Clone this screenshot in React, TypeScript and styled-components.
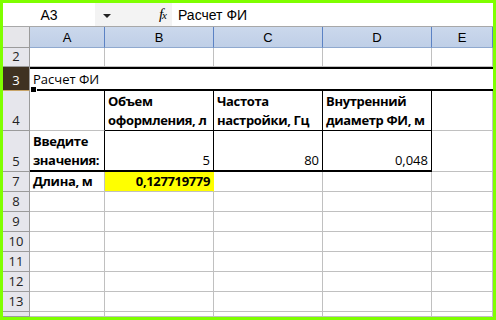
import styled, { createGlobalStyle } from 'styled-components';

const GRID = '#c0c0c0';
const BLACK = '#000';
const YELLOW = '#ffff00';
const HEAD_LINE = '#9b9b9b';

const GlobalStyle = createGlobalStyle`
    html, body {
        margin: 0;
        padding: 0;
        background: #7fff00;
    }
`;

type CellSpec = {
    text?: string[];
    bold?: boolean;
    right?: boolean;
    fill?: string;
    rb?: string;
    bb?: string;
    bbw?: number;
    span?: number;
    selected?: boolean;
};

type RowSpec = {
    num: string;
    height: number;
    dark?: boolean;
    cells: CellSpec[];
};

const empty = (): CellSpec[] => [{}, {}, {}, {}, {}];

const rows: RowSpec[] = [
    { num: '2', height: 19, cells: empty() },
    { num: '3', height: 24, dark: true, cells: [{ text: ['Расчет ФИ'], span: 5, selected: true }] },
    {
        num: '4', height: 40, cells: [
            { rb: BLACK },
            { text: ['Объем', 'оформления, л'], bold: true, rb: BLACK, bb: BLACK },
            { text: ['Частота', 'настройки, Гц'], bold: true, rb: BLACK, bb: BLACK },
            { text: ['Внутренний', 'диаметр ФИ, м'], bold: true, rb: BLACK, bb: BLACK },
            {},
        ]
    },
    {
        num: '5', height: 41, cells: [
            { text: ['Введите', 'значения:'], bold: true, rb: BLACK, bb: BLACK, bbw: 2 },
            { text: ['5'], right: true, rb: BLACK, bb: BLACK, bbw: 2 },
            { text: ['80'], right: true, rb: BLACK, bb: BLACK, bbw: 2 },
            { text: ['0,048'], right: true, rb: BLACK, bb: BLACK, bbw: 2 },
            {},
        ]
    },
    {
        num: '7', height: 20, cells: [
            { text: ['Длина, м'], bold: true },
            { text: ['0,127719779'], bold: true, right: true, fill: YELLOW, rb: YELLOW },
            {}, {}, {},
        ]
    },
    ...['8', '9', '10', '11', '12', '13'].map(num => ({ num, height: 20, cells: empty() })),
    { num: '', height: 5, cells: empty() },
];

const Frame = styled.div`
    box-sizing: border-box;
    width: 496px;
    height: 320px;
    padding: 3px;
    background: #7fff00;
`;

const Window = styled.div`
    width: 490px;
    height: 314px;
    background: #fff;
    overflow: hidden;
    display: flex;
    flex-direction: column;
`;

const FormulaBar = styled.div`
    display: flex;
    align-items: stretch;
    height: 23px;
    border-bottom: 1px solid #a8a8a8;
    font-family: "Liberation Sans", Arial, sans-serif;
    font-size: 14px;
    color: #000;
    flex-shrink: 0;
`;

const NameBox = styled.div`
    width: 92px;
    display: flex;
    align-items: center;
    justify-content: center;
    background: #fff;
`;

const Tools = styled.div`
    width: 77px;
    display: flex;
    align-items: center;
    justify-content: space-between;
    padding: 0 6px 0 8px;
    box-sizing: border-box;
    background: #f3f3f3;
`;

const Arrow = styled.span`
    width: 0;
    height: 0;
    margin-top: 2px;
    border-left: 4px solid transparent;
    border-right: 4px solid transparent;
    border-top: 4px solid #222;
`;

const Fx = styled.span`
    font-family: "Liberation Serif", "Times New Roman", serif;
    font-style: italic;
    font-size: 15px;
    letter-spacing: -1px;

    small {
        font-size: 11px;
    }
`;

const Formula = styled.div`
    flex: 1;
    display: flex;
    align-items: center;
    padding-left: 6px;
    background: #fff;
`;

const Sheet = styled.div<{ $rows: string }>`
    display: grid;
    grid-template-columns: 27px 75px 109px 109px 109px 61px;
    grid-template-rows: 21px ${p => p.$rows};
    font-family: "Open Sans", "Noto Sans", sans-serif;
    font-size: 13px;
    color: #000;
`;

const Corner = styled.div`
    box-sizing: border-box;
    background: #e6e6ea;
    border-right: 1px solid ${HEAD_LINE};
    border-bottom: 1px solid ${HEAD_LINE};
`;

const ColHead = styled.div`
    box-sizing: border-box;
    display: flex;
    align-items: center;
    justify-content: center;
    background: linear-gradient(#cbd8ec, #bfcfe7);
    border-right: 1px solid #5b82c4;
    border-bottom: 1px solid #8fa9cf;
    font-family: "Liberation Sans", Arial, sans-serif;
    font-size: 13px;
`;

const RowHead = styled.div<{ $dark?: boolean }>`
    box-sizing: border-box;
    display: flex;
    align-items: flex-end;
    justify-content: center;
    padding-bottom: 1px;
    background: ${p => (p.$dark ? '#3f3221' : '#e6e6ec')};
    color: ${p => (p.$dark ? '#fff' : '#222')};
    border-right: 1px solid ${HEAD_LINE};
    border-bottom: 1px solid ${p => (p.$dark ? '#c8a468' : HEAD_LINE)};
    line-height: 18px;
`;

const Cell = styled.div<{
    $bold?: boolean;
    $right?: boolean;
    $fill?: string;
    $rb?: string;
    $bb?: string;
    $bbw?: number;
    $span?: number;
}>`
    box-sizing: border-box;
    grid-column: span ${p => p.$span ?? 1};
    display: flex;
    flex-direction: column;
    justify-content: flex-end;
    align-items: ${p => (p.$right ? 'flex-end' : 'flex-start')};
    padding: 0 3px 0 3px;
    background: ${p => p.$fill ?? '#fff'};
    border-right: 1px solid ${p => p.$rb ?? GRID};
    border-bottom: ${p => p.$bbw ?? 1}px solid ${p => p.$bb ?? GRID};
    font-weight: ${p => (p.$bold ? 700 : 400)};
    letter-spacing: ${p => (p.$bold ? '-0.35px' : '0')};
    line-height: 19px;
    white-space: nowrap;
    overflow: hidden;
`;

const Selected = styled.div`
    position: relative;
    box-sizing: border-box;
    grid-column: span 5;
    display: flex;
    align-items: flex-end;
    padding: 0 3px 1px 3px;
    border-top: 2px solid ${BLACK};
    border-bottom: 2px solid ${BLACK};
    line-height: 18px;
`;

const Handle = styled.span`
    position: absolute;
    left: 0;
    bottom: -4px;
    width: 5px;
    height: 5px;
    background: #000;
    border: 1px solid #fff;
`;

export default function App() {
    return (
        <Frame>
            <GlobalStyle />
            <Window>
                <FormulaBar>
                    <NameBox>A3</NameBox>
                    <Tools>
                        <Arrow />
                        <Fx>f<small>x</small></Fx>
                    </Tools>
                    <Formula>Расчет ФИ</Formula>
                </FormulaBar>
                <Sheet $rows={rows.map(r => `${r.height}px`).join(' ')}>
                    <Corner />
                    {['A', 'B', 'C', 'D', 'E'].map(c => <ColHead key={c}>{c}</ColHead>)}
                    {rows.map(row => [
                        <RowHead key={`h${row.num}`} $dark={row.dark}>{row.num}</RowHead>,
                        ...row.cells.map((cell, i) =>
                            cell.selected ? (
                                <Selected key={`${row.num}-${i}`}>
                                    {cell.text?.[0]}
                                    <Handle />
                                </Selected>
                            ) : (
                                <Cell
                                    key={`${row.num}-${i}`}
                                    $bold={cell.bold}
                                    $right={cell.right}
                                    $fill={cell.fill}
                                    $rb={cell.rb}
                                    $bb={cell.bb}
                                    $bbw={cell.bbw}
                                    $span={cell.span}
                                >
                                    {cell.text?.map(t => <span key={t}>{t}</span>)}
                                </Cell>
                            )
                        ),
                    ])}
                </Sheet>
            </Window>
        </Frame>
    );
}
